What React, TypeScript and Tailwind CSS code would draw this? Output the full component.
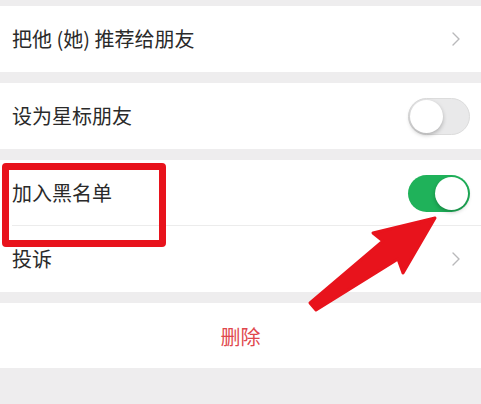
import { ChevronRight } from "lucide-react";

const font = { fontFamily: '"Noto Sans CJK SC", "Noto Sans", sans-serif' };

function Toggle({ on }: { on?: boolean }) {
    return (
        <div
            className={`relative h-[37px] w-[62px] rounded-full ${on ? "bg-[#1fb25a]" : "bg-[#e9e9ea] border border-[#dcdcdc]"}`}
        >
            <div
                className={`absolute h-[33px] w-[33px] rounded-full bg-white shadow-[0_2px_4px_rgba(0,0,0,0.25)] ${on ? "right-[2px] top-[2px]" : "left-[1px] top-[1px]"}`}
            />
        </div>
    );
}

function Row({ label, right, divider }: { label: string; right: React.ReactNode; divider?: boolean }) {
    return (
        <div className="relative flex h-[66px] items-center justify-between bg-white pl-3 pr-[11px]">
            <span className="text-[20px] text-[#2a2a2a]">{label}</span>
            {right}
            {divider && <div className="absolute bottom-0 left-3 right-0 h-px bg-[#ececec]" />}
        </div>
    );
}

const Chevron = () => <ChevronRight className="mr-[2px] h-6 w-6 text-[#b9b9bb]" strokeWidth={1.4} />;

export default function App() {
    return (
        <div className="relative h-[404px] w-[481px] overflow-hidden bg-[#eeedee]" style={font}>
            <div className="flex flex-col pt-[6px]">
                <Row label="把他 (她) 推荐给朋友" right={<Chevron />} />
                <div className="h-[11px]" />
                <Row label="设为星标朋友" right={<Toggle />} />
                <div className="h-[11px]" />
                <Row label="加入黑名单" right={<Toggle on />} divider />
                <Row label="投诉" right={<Chevron />} />
                <div className="h-[11px]" />
                <div className="flex h-[65px] items-center justify-center bg-white pt-[3px]">
                    <span className="text-[20px] text-[#e0474c]">删除</span>
                </div>
            </div>

            {/* highlight box */}
            <div className="absolute left-[2px] top-[163px] h-[84px] w-[164px] rounded-[4px] border-[7px] border-[#e8131c]" />

            {/* arrow */}
            <svg className="absolute left-0 top-0" width="481" height="404" viewBox="0 0 481 404">
                <polygon
                    points="310,303 383,241 373,233 435,218 403,273 398,259 316,310"
                    fill="#e8131c"
                    stroke="#e8131c"
                    strokeWidth="3"
                    strokeLinejoin="round"
                />
            </svg>
        </div>
    );
}
